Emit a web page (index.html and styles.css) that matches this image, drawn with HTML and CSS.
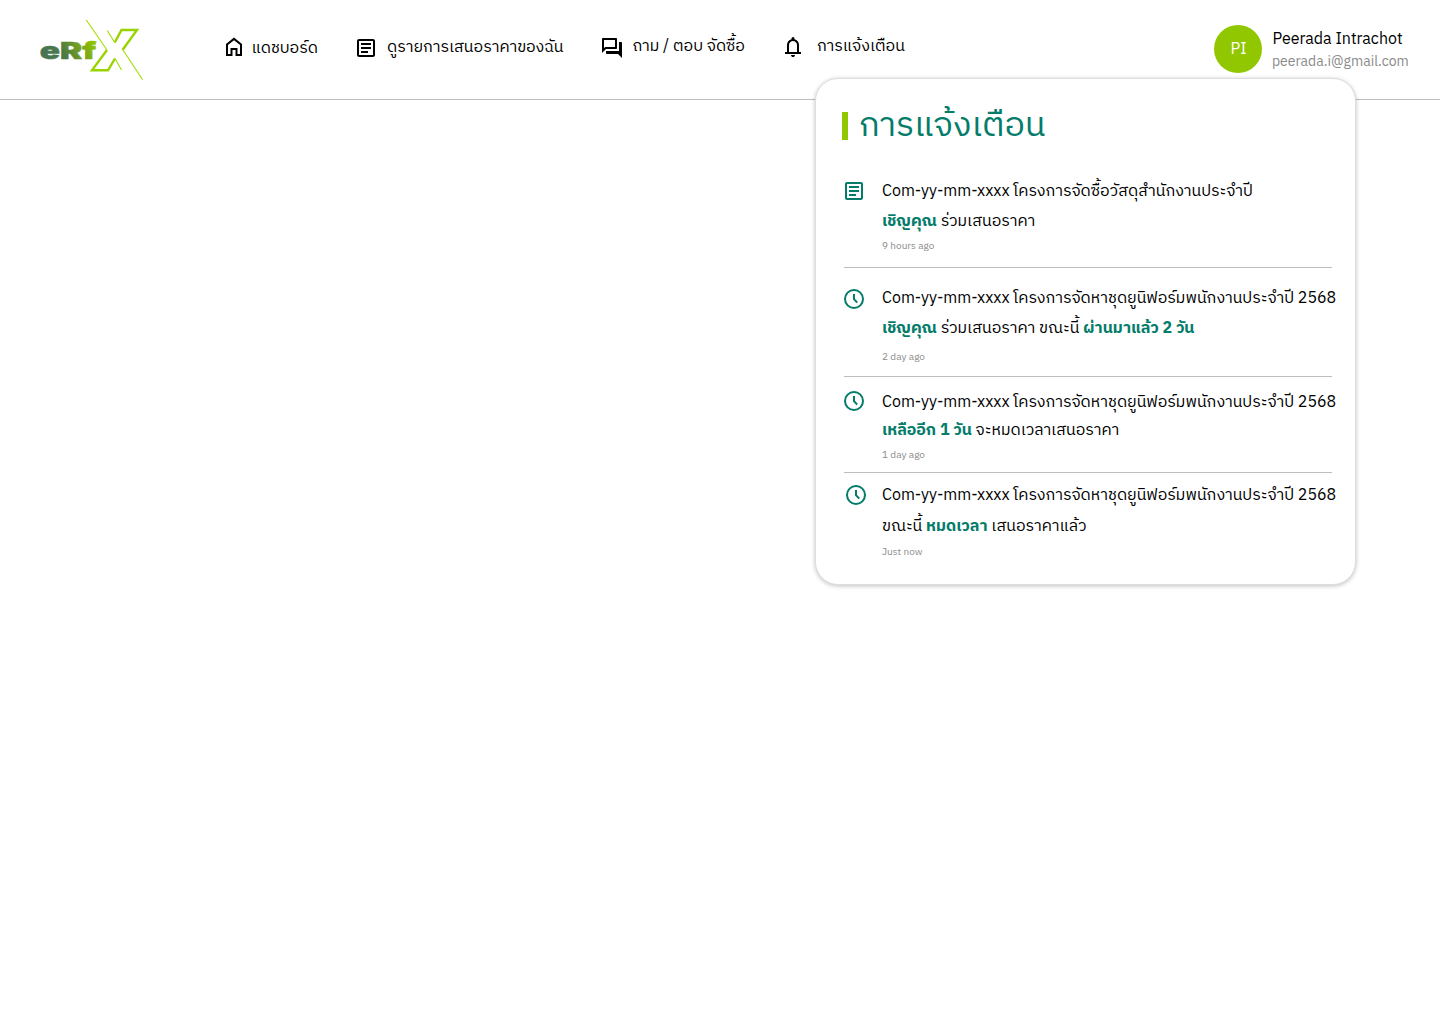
FILE: index.html
```html
<!DOCTYPE html>
<html lang="th">
<head>
<meta charset="utf-8">
<title>eRfX</title>
<link rel="stylesheet" href="styles.css">
</head>
<body>
<svg class="defs" width="0" height="0" aria-hidden="true">
  <symbol id="article" viewBox="0 0 24 24"><path d="M19 5v14H5V5h14m0-2H5c-1.1 0-2 .9-2 2v14c0 1.1.9 2 2 2h14c1.100 0 2-.9 2-2V5c0-1.100-.9-2-2-2z"/><path d="M14 17H7v-2h7v2zm3-4H7v-2h10v2zm0-4H7V7h10v2z"/></symbol>
  <symbol id="clock" viewBox="0 0 24 24"><circle cx="12" cy="12" r="9" fill="none" stroke="currentColor" stroke-width="2"/><path d="M12 7v5.200l3.200 3.500" fill="none" stroke="currentColor" stroke-width="2"/></symbol>
</svg>
<header class="topbar">
  <svg class="logo" viewBox="40 20 104 60">
    <defs><linearGradient id="brand" gradientUnits="userSpaceOnUse" x1="46" y1="62" x2="92" y2="40"><stop offset="0" stop-color="#467457"/><stop offset=".4" stop-color="#4d7b42"/><stop offset=".75" stop-color="#78a51c"/><stop offset="1" stop-color="#8fc400"/></linearGradient></defs>
    <text class="logo-text" x="39.800" y="59" textLength="56.500" lengthAdjust="spacingAndGlyphs" fill="url(#brand)" stroke="url(#brand)">eRf</text>
    <path class="logo-thin" d="M86.300 20 107 50M123 50l19.700 29.700"/>
    <path class="logo-bold" d="M107 50 92 70.300H108L115 58.500M114.700 42.500 121.500 30H137L122.500 50"/>
    <path class="logo-thin" d="M107.300 30.500l7.400 12M115 58.500l6.500 11.500"/>
  </svg>
  <nav class="menu">
    <a class="home"><svg class="icon" viewBox="0 0 24 24"><path d="M5 20V9.500l7-5.600 7 5.600V20h-4.500v-6h-5v6z" fill="none" stroke="currentColor" stroke-width="2"/></svg><span>แดชบอร์ด</span></a>
    <a class="quotes"><svg class="icon"><use href="#article"/></svg><span>ดูรายการเสนอราคาของฉัน</span></a>
    <a class="forum"><svg class="icon" viewBox="0 0 24 24"><path d="M15 4v7H5.170L4 12.170V4h11m1-2H3c-.55 0-1 .45-1 1v14l4-4h10c.55 0 1-.45 1-1V3c0-.55-.45-1-1-1zm5 4h-2v9H6v2c0 .55.45 1 1 1h11l4 4V7c0-.55-.45-1-1-1z"/></svg><span>ถาม / ตอบ จัดซื้อ</span></a>
    <a class="alerts"><svg class="icon" viewBox="0 0 24 24"><path d="M4 19v-2h2v-7q0-2.075 1.250-3.687T10.500 4.200v-.7q0-.625.437-1.062T12 2t1.063.438T13.500 3.500v.7q2 .5 3.250 2.113T18 10v7h2v2zm8 3q-.825 0-1.412-.587T10 20h4q0 .825-.587 1.413T12 22m-4-5h8v-7q0-1.650-1.175-2.825T12 6 9.175 7.175 8 10z"/></svg><span>การแจ้งเตือน</span></a>
  </nav>
  <div class="user">
    <span class="avatar">PI</span>
    <div><div class="name">Peerada Intrachot</div><div class="email">peerada.i@gmail.com</div></div>
  </div>
</header>
<section class="panel">
  <h1 class="title">การแจ้งเตือน</h1>
  <ul class="list">
    <li class="item first"><svg class="icon"><use href="#article"/></svg><div class="body"><p>Com-yy-mm-xxxx โครงการจัดซื้อวัสดุสำนักงานประจำปี</p><p><b>เชิญคุณ</b> ร่วมเสนอราคา</p><time>9 hours ago</time></div></li>
    <li class="item second"><svg class="icon"><use href="#clock"/></svg><div class="body"><p>Com-yy-mm-xxxx โครงการจัดหาชุดยูนิฟอร์มพนักงานประจำปี 2568</p><p><b>เชิญคุณ</b> ร่วมเสนอราคา ขณะนี้ <b>ผ่านมาแล้ว 2 วัน</b></p><time>2 day ago</time></div></li>
    <li class="item third"><svg class="icon"><use href="#clock"/></svg><div class="body"><p>Com-yy-mm-xxxx โครงการจัดหาชุดยูนิฟอร์มพนักงานประจำปี 2568</p><p><b>เหลืออีก 1 วัน</b> จะหมดเวลาเสนอราคา</p><time>1 day ago</time></div></li>
    <li class="item fourth"><svg class="icon"><use href="#clock"/></svg><div class="body"><p>Com-yy-mm-xxxx โครงการจัดหาชุดยูนิฟอร์มพนักงานประจำปี 2568</p><p>ขณะนี้ <b>หมดเวลา</b> เสนอราคาแล้ว</p><time>Just now</time></div></li>
  </ul>
</section>
</body>
</html>
```
FILE: styles.css
```css
* { box-sizing: border-box; }
body { margin: 0; background: #fff; color: #000; font: 16px/30px "IBM Plex Sans Thai", "Noto Sans", "Noto Sans Thai", sans-serif; }
p, h1, ul { margin: 0; padding: 0; list-style: none; }
.defs { display: block; }
.icon { width: 24px; height: 24px; flex: none; fill: currentColor; }
.topbar { height: 100px; border-bottom: 1px solid #bdbdbd; display: flex; align-items: flex-start; padding: 20px 31px 0 40px; }
.logo { width: 104px; height: 60px; overflow: visible; }
.logo-text { font: 900 23px Inter, sans-serif; stroke-width: .5; }
.logo-thin { fill: none; stroke: #a2dc00; stroke-width: 1.1; }
.logo-bold { fill: none; stroke: #9ad400; stroke-width: 2.4; }
.menu { display: flex; margin-left: 78px; white-space: nowrap; }
.menu a { display: flex; align-items: center; height: 30px; }
.home { width: 132px; margin-top: 12px; gap: 5.5px; }
.home span { padding-top: 4px; }
.quotes { width: 246px; margin-top: 13px; gap: 9px; }
.forum { width: 181px; margin-top: 13px; gap: 8.4px; }
.forum span { padding-bottom: 2px; }
.alerts { margin-top: 12px; gap: 12px; }
.user { display: flex; margin: 5px 0 0 auto; gap: 10px; width: 195px; white-space: nowrap; }
.avatar { width: 48px; height: 48px; border-radius: 50%; background: #91c700; color: #fff; text-align: center; line-height: 50px; padding-left: 1px; flex: none; }
.name { line-height: 22px; padding: 4px 0 0 .5px; }
.email { font-size: 14px; line-height: 18px; margin-top: 2px; color: #8b8b8b; }
.panel { position: absolute; left: 815px; top: 78px; width: 541px; height: 507px; border: 1px solid #dedede; border-radius: 23px; background: #fff; box-shadow: 0 1px 4px rgba(0,0,0,.25); padding: 33px 0 0 26px; }
.title { height: 28px; border-left: 6px solid #91c700; padding-left: 11px; color: #047c6a; font-size: 34px; line-height: 28px; font-weight: 400; white-space: nowrap; }
.list { margin: 35px 0 0 2px; }
.item { width: 488px; display: flex; gap: 16px; border-bottom: 1px solid #bdbdbd; white-space: nowrap; }
.item .icon { color: #047c6a; margin-left: -2px; }
.item b { color: #047c6a; font-weight: 700; }
.item time { display: block; font-size: 10px; line-height: 20px; color: #8b8b8b; }
.first { height: 93px; }
.first .icon { margin-top: 4px; }
.first .body { padding-top: 2px; }
.first time { margin-top: -1px; }
.second { height: 109px; padding-top: 15px; }
.second .icon { margin-top: 4px; }
.second .body { padding-top: 1px; }
.second time { margin-top: 3px; }
.third { height: 96px; padding-top: 10px; }
.third .icon { margin-top: 2px; }
.third .body { padding-top: 2px; }
.third p { line-height: 28px; }
.fourth { height: 90px; padding-top: 7px; border: 0; gap: 14px; }
.fourth .icon { margin: 3px 0 0; }
.fourth .body { padding-top: 1px; }
.fourth p + p { line-height: 31px; }
```
